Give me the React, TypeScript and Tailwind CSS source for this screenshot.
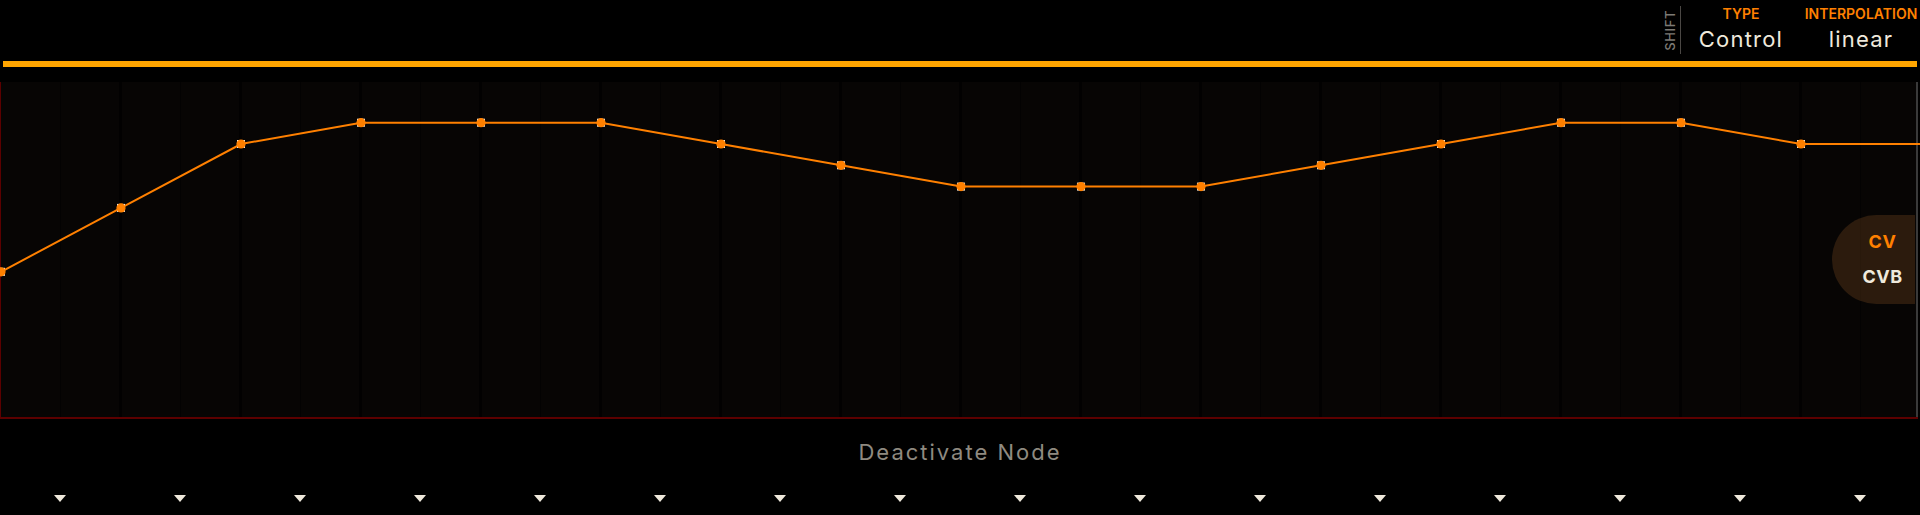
import React from "react";

const LEVELS = [7, 4, 1, 0, 0, 0, 1, 2, 3, 3, 3, 2, 1, 0, 0, 1];
const STEP = 120;

function levelY(k: number) {
  return 40.7 + k * 21.3;
}

function Curve() {
  const pts = LEVELS.map((k, i) => [i * STEP, levelY(k)] as const);
  const last = pts[pts.length - 1];
  const line = [...pts, [1920, last[1]] as const].map(([x, y]) => `${x},${y}`).join(" ");
  const cols = Array.from({ length: 32 }, (_, i) => i + 1);

  return (
    <svg className="absolute left-0 top-0 overflow-visible" width={1920} height={335}>
      {cols.map((c) =>
        c % 2 === 0 ? (
          <rect key={c} x={c * 60 - 2} y={0} width={3} height={335} fill="#020101" />
        ) : (
          <rect key={c} x={c * 60 - 1} y={0} width={1} height={335} fill="#030202" />
        )
      )}
      <rect x={1915} y={0} width={2} height={335} fill="#3a3a3a" />
      <polyline points={line} fill="none" stroke="#ff8000" strokeWidth={2} />
      {pts.map(([x, y], i) => (
        <g key={i}>
          <rect x={x - 4} y={y - 4} width={8} height={8} fill="#f4eee4" />
          <circle cx={x} cy={y} r={4.6} fill="#ff8000" />
        </g>
      ))}
    </svg>
  );
}

export default function App() {
  return (
    <div className="w-[1920px] h-[515px] overflow-hidden bg-black font-['Inter','Liberation_Sans',sans-serif]">
      {/* header */}
      <div className="h-[61px] flex justify-end items-start pt-[6px] pr-[3px]">
        <div className="h-[48px] w-[12px] flex items-center justify-center">
          <span className="[writing-mode:vertical-rl] rotate-180 text-[13px] leading-none font-medium tracking-[0.6px] text-[#7d7a75]">
            SHIFT
          </span>
        </div>
        <div className="ml-[4px] h-[48px] w-px bg-[#4a4744]" />
        <div className="ml-[10px] w-[100px] flex flex-col items-center">
          <span className="text-[14px] leading-[16px] font-semibold text-[#ff8000]">TYPE</span>
          <span className="mt-[4px] text-[22px] leading-[26px] tracking-[1.2px] text-[#efe9dc]">Control</span>
        </div>
        <div className="ml-[14px] w-[112px] flex flex-col items-center">
          <span className="text-[14px] leading-[16px] font-semibold text-[#ff8000] whitespace-nowrap">
            INTERPOLATION
          </span>
          <span className="mt-[4px] text-[22px] leading-[26px] tracking-[1.2px] text-[#efe9dc]">linear</span>
        </div>
      </div>

      {/* level bar */}
      <div className="mx-[3px] h-[6px] bg-[#ffa500]" />

      {/* envelope graph */}
      <div className="relative mt-[15px] w-[1918px] h-[337px] bg-[#070504] border-l border-b-2 border-[#5c0000]">
        <Curve />
        <div className="absolute right-[3px] top-[133px] w-[83px] h-[89px] rounded-l-full bg-[#ff9a40]/15 flex flex-col items-center justify-center gap-[15px] pl-[18px]">
          <span className="text-[18px] leading-[20px] font-bold tracking-[0.5px] text-[#ff8000]">CV</span>
          <span className="text-[18px] leading-[20px] font-bold tracking-[0.5px] text-[#efe9dc]">CVB</span>
        </div>
      </div>

      {/* footer */}
      <div className="mt-[20px] text-center text-[22px] leading-[26px] tracking-[2px] text-[#8f8a80]">Deactivate Node</div>
      <div className="mt-[30px] flex">
        {LEVELS.map((_, i) => (
          <div key={i} className="w-[120px] flex justify-center">
            <div className="w-0 h-0 border-l-[6px] border-r-[6px] border-t-[7px] border-l-transparent border-r-transparent border-t-[#efe9dc]" />
          </div>
        ))}
      </div>
    </div>
  );
}
